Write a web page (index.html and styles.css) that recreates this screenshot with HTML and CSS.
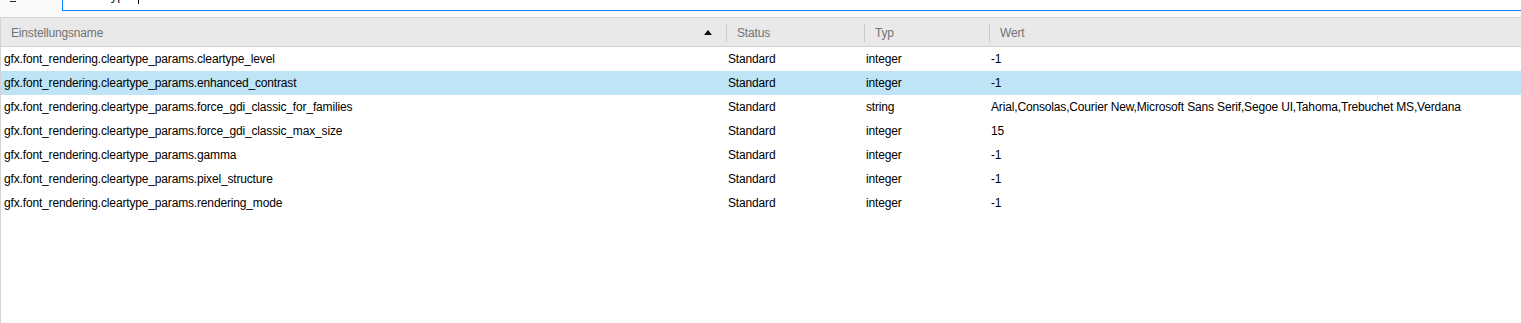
FILE: index.html
```html
<!DOCTYPE html>
<html lang="de">
<head>
    <meta charset="UTF-8">
    <title>about:config</title>
    <link rel="stylesheet" href="styles.css">
</head>
<body>
    <div class="toolbar">
        <span class="toolbar-dash"></span>
        <div class="search-box">
            <span class="search-text">cleartyp</span><span class="caret"></span>
        </div>
    </div>

    <div class="tree">
        <div class="tree-head">
            <div class="head-cell head-name">
                <span>Einstellungsname</span>
                <span class="sort-arrow"></span>
            </div>
            <div class="head-cell"><span class="head-label">Status</span></div>
            <div class="head-cell"><span class="head-label">Typ</span></div>
            <div class="head-cell"><span class="head-label">Wert</span></div>
        </div>

        <div class="tree-row">
            <div class="cell cell-name">gfx.font_rendering.cleartype_params.cleartype_level</div>
            <div class="cell">Standard</div>
            <div class="cell">integer</div>
            <div class="cell">-1</div>
        </div>
        <div class="tree-row selected">
            <div class="cell cell-name">gfx.font_rendering.cleartype_params.enhanced_contrast</div>
            <div class="cell">Standard</div>
            <div class="cell">integer</div>
            <div class="cell">-1</div>
        </div>
        <div class="tree-row">
            <div class="cell cell-name">gfx.font_rendering.cleartype_params.force_gdi_classic_for_families</div>
            <div class="cell">Standard</div>
            <div class="cell">string</div>
            <div class="cell">Arial,Consolas,Courier New,Microsoft Sans Serif,Segoe UI,Tahoma,Trebuchet MS,Verdana</div>
        </div>
        <div class="tree-row">
            <div class="cell cell-name">gfx.font_rendering.cleartype_params.force_gdi_classic_max_size</div>
            <div class="cell">Standard</div>
            <div class="cell">integer</div>
            <div class="cell">15</div>
        </div>
        <div class="tree-row">
            <div class="cell cell-name">gfx.font_rendering.cleartype_params.gamma</div>
            <div class="cell">Standard</div>
            <div class="cell">integer</div>
            <div class="cell">-1</div>
        </div>
        <div class="tree-row">
            <div class="cell cell-name">gfx.font_rendering.cleartype_params.pixel_structure</div>
            <div class="cell">Standard</div>
            <div class="cell">integer</div>
            <div class="cell">-1</div>
        </div>
        <div class="tree-row">
            <div class="cell cell-name">gfx.font_rendering.cleartype_params.rendering_mode</div>
            <div class="cell">Standard</div>
            <div class="cell">integer</div>
            <div class="cell">-1</div>
        </div>
    </div>
</body>
</html>
```

FILE: styles.css
```css
html, body {
    height: 100%;
}
body {
    margin: 0;
    background: #ffffff;
    font-family: "Liberation Sans", Arial, sans-serif;
    font-size: 12px;
    letter-spacing: -0.16px;
    color: #000;
    overflow: hidden;
}
.toolbar {
    display: flex;
    align-items: flex-start;
    height: 17px;
    background: #f9f9f9;
    overflow: hidden;
}
.toolbar-dash {
    flex: none;
    width: 6px;
    height: 1px;
    margin: 1px 46px 0 10px;
    background: #222;
}
.search-box {
    flex: 1;
    display: flex;
    align-items: flex-end;
    box-sizing: border-box;
    height: 31px;
    margin-top: -20px;
    padding: 0 0 6px 17px;
    background: #fff;
    border: 1px solid #0a84ff;
    border-right: none;
    overflow: hidden;
    font-size: 13px;
    line-height: 16px;
}
.search-text {
    color: #222;
}
.caret {
    width: 1px;
    height: 16px;
    margin-left: 14px;
    background: #000;
}
.tree {
    height: calc(100% - 17px);
    border-left: 1px solid #d4d4d8;
    box-sizing: border-box;
}
.tree-head,
.tree-row {
    display: grid;
    grid-template-columns: 725px 138px 125px 1fr;
}
.tree-head {
    box-sizing: border-box;
    height: 30px;
    padding-top: 2px;
    background: #e9e9e9;
    border-top: 1px solid #d3d3d3;
    border-bottom: 1px solid #d3d3d3;
    color: #737373;
}
.head-cell {
    display: flex;
    align-items: center;
}
.head-label {
    display: flex;
    align-items: center;
    height: 18px;
    padding-left: 10px;
    border-left: 1px solid #c9c9c9;
}
.head-name {
    justify-content: space-between;
    padding: 0 14px 0 10px;
}
.sort-arrow {
    width: 0;
    height: 0;
    margin-top: -2px;
    border-left: 4px solid transparent;
    border-right: 4px solid transparent;
    border-bottom: 5px solid #111;
}
.tree-row {
    box-sizing: border-box;
    height: 24px;
    padding-top: 1px;
    line-height: 23px;
}
.tree-row.selected {
    background: #bfe4f6;
}
.cell {
    padding-left: 2px;
    white-space: nowrap;
}
.cell-name {
    padding-left: 3px;
}
```
